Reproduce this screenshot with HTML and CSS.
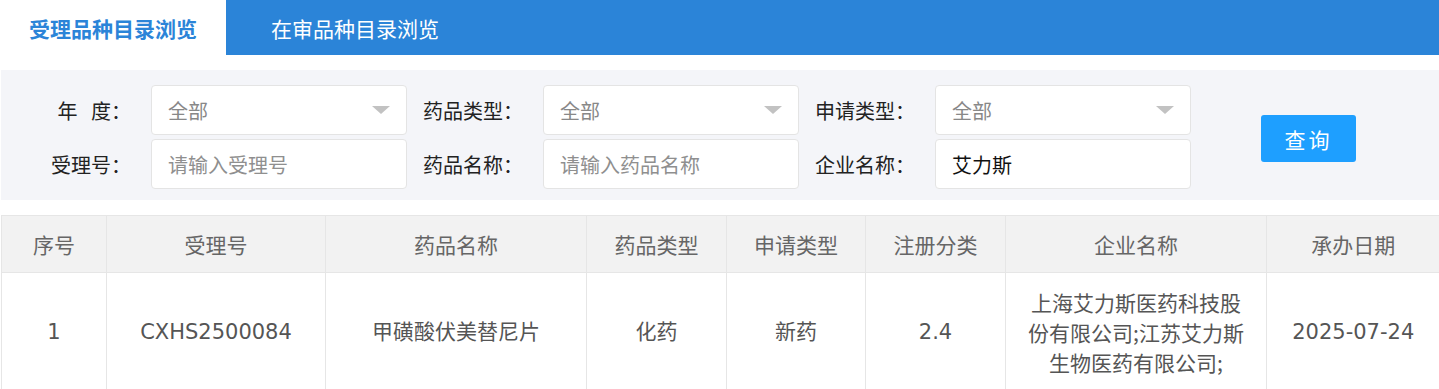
FILE: index.html
```html
<!DOCTYPE html>
<html lang="zh-CN">
<head>
  <meta charset="UTF-8">
  <title>受理品种目录浏览</title>
  <link rel="stylesheet" href="styles.css">
</head>
<body>
  <div class="tabs">
    <a class="tab active" href="#">受理品种目录浏览</a>
    <a class="tab" href="#">在审品种目录浏览</a>
  </div>

  <form class="filters">
    <div class="rows">
      <div class="row">
        <label class="lbl">年&nbsp;&nbsp;&nbsp;度：</label>
        <div class="select"><span>全部</span><i class="arrow"></i></div>
        <label class="lbl">药品类型：</label>
        <div class="select"><span>全部</span><i class="arrow"></i></div>
        <label class="lbl">申请类型：</label>
        <div class="select"><span>全部</span><i class="arrow"></i></div>
      </div>
      <div class="row">
        <label class="lbl">受理号：</label>
        <input class="field" type="text" placeholder="请输入受理号">
        <label class="lbl">药品名称：</label>
        <input class="field" type="text" placeholder="请输入药品名称">
        <label class="lbl">企业名称：</label>
        <input class="field" type="text" value="艾力斯">
      </div>
    </div>
    <button type="button" class="btn">查询</button>
  </form>

  <table class="list">
    <colgroup>
      <col style="width:105px"><col style="width:219px"><col style="width:261px"><col style="width:140px">
      <col style="width:139px"><col style="width:140px"><col style="width:261px"><col style="width:173px">
    </colgroup>
    <thead>
      <tr><th>序号</th><th>受理号</th><th>药品名称</th><th>药品类型</th><th>申请类型</th><th>注册分类</th><th>企业名称</th><th>承办日期</th></tr>
    </thead>
    <tbody>
      <tr>
        <td>1</td>
        <td>CXHS2500084</td>
        <td>甲磺酸伏美替尼片</td>
        <td>化药</td>
        <td>新药</td>
        <td>2.4</td>
        <td class="cjk">上海艾力斯医药科技股份有限公司;江苏艾力斯生物医药有限公司;</td>
        <td>2025-07-24</td>
      </tr>
    </tbody>
  </table>
</body>
</html>
```

FILE: styles.css
```css
body { margin: 0; font-family: "Microsoft YaHei", "Noto Sans CJK SC", "Noto Sans", sans-serif; color: #222; background: #fff; }

.tabs { display: flex; height: 55px; background: #2b84d8; }
.tab { display: flex; align-items: center; height: 55px; font-size: 21px; color: #fff; text-decoration: none; }
.tab.active { width: 226px; justify-content: center; background: #fff; color: #2b84d8; font-weight: bold; }
.tab + .tab { padding-left: 45px; }

.filters { display: flex; margin: 15px 0 0 1px; padding: 15px 0 11px 30px; background: #f4f5f9; }
.rows { display: flex; flex-direction: column; gap: 4px; }
.row { display: flex; align-items: center; }
.lbl { width: 100px; margin-right: 20px; font-size: 20px; text-align: right; color: #222; white-space: nowrap; }
.select, .field { box-sizing: border-box; width: 256px; height: 50px; margin-right: 16px; border: 1px solid #e4e4e4; border-radius: 4px; background: #fff; font-family: inherit; font-size: 20px; }
.select { position: relative; display: flex; align-items: center; padding-left: 16px; color: #888; }
.arrow { position: absolute; right: 16px; top: 20px; width: 0; height: 0; border-left: 9px solid transparent; border-right: 9px solid transparent; border-top: 8px solid #c2c2c2; }
.field { padding: 0 16px; color: #111; outline: none; }
.field::placeholder { color: #8f8f8f; }
.btn { align-self: center; margin: 3px 0 0 54px; width: 95px; height: 47px; border: none; border-radius: 3px; background: #1e9fff; color: #fff; font-family: inherit; font-size: 21px; letter-spacing: 3px; cursor: pointer; }

.list { table-layout: fixed; width: 1438px; margin: 15px 0 0 1px; border-collapse: collapse; font-size: 21px; }
.list th, .list td { border: 1px solid #e6e6e6; text-align: center; }
.list th { height: 56px; padding: 0 10px; background: #f2f2f2; color: #666; font-weight: normal; }
.list td { padding: 14px 20px; line-height: 30px; color: #555; font-family: "DejaVu Sans", "Noto Sans CJK SC", sans-serif; }
.list td.cjk { font-family: "Noto Sans CJK SC", sans-serif; }
.list tr > :last-child { border-right: none; }
```
